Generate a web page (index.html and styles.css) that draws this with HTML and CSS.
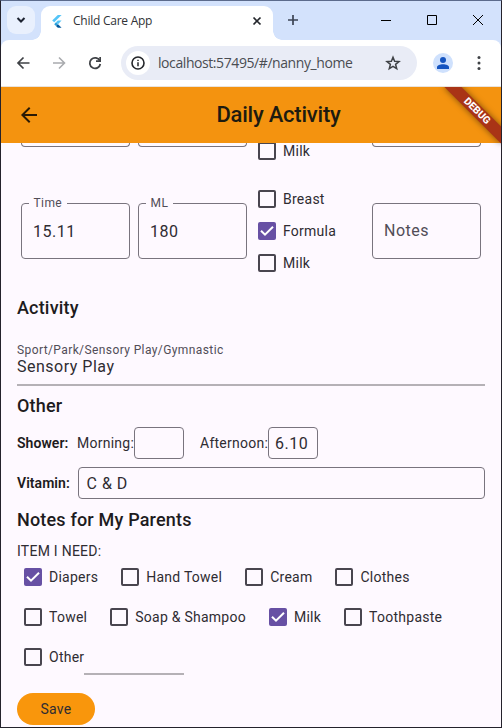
FILE: index.html
```html
<!DOCTYPE html>
<html lang="en">
<head>
<meta charset="utf-8">
<title>Child Care App</title>
<link rel="stylesheet" href="styles.css">
</head>
<body>
<div class="window">
  <div class="tabstrip">
    <div class="tab-search"><svg width="10" height="8" viewBox="0 0 10 8"><path d="M1.5 2 5 5.5 8.500 2" fill="none" stroke="#1d2331" stroke-width="2"/></svg></div>
    <div class="tab">
      <svg class="favicon" width="10" height="13" viewBox="0 0 10 13"><path d="M5.800 0H9.600L2.200 7.300.2 5.500z" fill="#54c5f8"/><path d="M5.800 5.500H9.600L6 9.200 4 7.300z" fill="#54c5f8"/><path d="M4 7.300 6 9.200 4 11.100 2.200 9.200z" fill="#29a0dc"/><path d="M4 11.100 6 9.200 9.600 12.700H5.800z" fill="#01579b"/></svg>
      <span class="tab-title">Child Care App</span>
      <svg class="tab-close" width="10" height="10" viewBox="0 0 10 10"><path d="M1.500 1.500 8.500 8.500M8.500 1.500 1.500 8.500" stroke="#24272c" stroke-width="1.700"/></svg>
    </div>
    <svg class="new-tab" width="12" height="12" viewBox="0 0 12 12"><path d="M6 1V11M1 6H11" stroke="#3c4454" stroke-width="1.700"/></svg>
    <div class="controls">
      <svg width="10" height="10" viewBox="0 0 10 10"><path d="M0 5.500H10" stroke="#000"/></svg>
      <svg width="10" height="10" viewBox="0 0 10 10"><path d="M.5.5H9.500V9.500H.5z" fill="none" stroke="#000"/></svg>
      <svg width="10" height="10" viewBox="0 0 10 10"><path d="M0 0 10 10M10 0 0 10" stroke="#000"/></svg>
    </div>
  </div>
  <div class="toolbar">
    <svg width="24" height="24" viewBox="0 0 24 24" class="nav"><path d="M18.500 12H7.500M12.500 6.500 7 12 12.500 17.500" fill="none" stroke="#3f4246" stroke-width="1.700"/></svg>
    <svg width="24" height="24" viewBox="0 0 24 24" class="nav"><path d="M6 12H17M12 6.500 17.500 12 12 17.500" fill="none" stroke="#a9abae" stroke-width="1.600"/></svg>
    <svg width="24" height="24" viewBox="0 0 24 24" class="nav"><path d="M16.800 9.700A5.300 5.300 0 1 0 17.300 13" fill="none" stroke="#3f4246" stroke-width="1.800"/><path d="M18 6V11H13V9.300H16.300V6z" fill="#3f4246"/></svg>
    <div class="omnibox">
      <span class="site-info"><svg width="14" height="14" viewBox="0 0 14 14"><circle cx="7" cy="7" r="6" fill="none" stroke="#24262a" stroke-width="1.600"/><path d="M7 6.200V10.200M7 3.700V5.100" stroke="#24262a" stroke-width="1.500"/></svg></span>
      <span class="url">localhost:57495/#/nanny_home</span>
      <svg class="star" width="16" height="16" viewBox="0 0 16 16"><path d="M8 2.200 9.600 6.300 14 6.600 10.600 9.400 11.700 13.700 8 11.300 4.300 13.700 5.400 9.400 2 6.600 6.400 6.300z" fill="none" stroke="#3f4246" stroke-width="1.500"/></svg>
    </div>
    <div class="profile"><svg width="12" height="12" viewBox="0 0 12 12"><circle cx="6" cy="3" r="3" fill="#1554c0"/><path d="M0 12V10C0 8.300 3 7.200 6 7.200S12 8.300 12 10V12z" fill="#1554c0"/></svg></div>
    <svg class="menu" width="4" height="16" viewBox="0 0 4 16" fill="#3f4246"><circle cx="2" cy="2.500" r="1.500"/><circle cx="2" cy="8" r="1.500"/><circle cx="2" cy="13.500" r="1.500"/></svg>
  </div>

  <div class="app">
    <header class="appbar">
      <svg width="24" height="24" viewBox="0 0 24 24"><path d="M20 11H7.830l5.590-5.590L12 4l-8 8 8 8 1.410-1.410L7.830 13H20z" fill="#2a1a05"/></svg>
      <h1>Daily Activity</h1>
    </header>
    <main>
      <div class="feed first">
        <div class="field"></div>
        <div class="field"></div>
        <label class="check"><i class="box"></i>Milk</label>
        <div class="field"></div>
      </div>
      <div class="feed">
        <div class="field"><span class="float">Time</span>15.11</div>
        <div class="field"><span class="float">ML</span>180</div>
        <div class="options">
          <label class="check"><i class="box"></i>Breast</label>
          <label class="check"><i class="box on"><svg viewBox="0 0 18 18"><path d="M3 8.700 7 12.700 15 4.700"/></svg></i>Formula</label>
          <label class="check"><i class="box"></i>Milk</label>
        </div>
        <div class="field hint">Notes</div>
      </div>
      <h2 class="activity">Activity</h2>
      <div class="underlined">
        <span class="caption">Sport/Park/Sensory Play/Gymnastic</span>
        <span class="value">Sensory Play</span>
      </div>
      <h2 class="other">Other</h2>
      <div class="line shower">
        <b>Shower:</b><span class="morning">Morning:</span><span class="input"></span><span class="afternoon">Afternoon:</span><span class="input">6.10</span>
      </div>
      <div class="line vitamin"><b>Vitamin:</b><span class="input wide">C &amp; D</span></div>
      <h2 class="notes">Notes for My Parents</h2>
      <p>ITEM I NEED:</p>
      <div class="items">
        <div class="items-row">
          <label class="check"><i class="box on"><svg viewBox="0 0 18 18"><path d="M3 8.700 7 12.700 15 4.700"/></svg></i>Diapers</label>
          <label class="check"><i class="box"></i>Hand Towel</label>
          <label class="check"><i class="box"></i>Cream</label>
          <label class="check"><i class="box"></i>Clothes</label>
        </div>
        <div class="items-row">
          <label class="check"><i class="box"></i>Towel</label>
          <label class="check"><i class="box"></i>Soap &amp; Shampoo</label>
          <label class="check"><i class="box on"><svg viewBox="0 0 18 18"><path d="M3 8.700 7 12.700 15 4.700"/></svg></i>Milk</label>
          <label class="check"><i class="box"></i>Toothpaste</label>
        </div>
        <div class="items-row">
          <label class="check"><i class="box"></i>Other<span class="blank"></span></label>
        </div>
      </div>
      <div class="save">Save</div>
    </main>
    <div class="banner">DEBUG</div>
  </div>
</div>
</body>
</html>
```
FILE: styles.css
```css
* { box-sizing: border-box; }
body { margin: 0; font-family: Roboto, sans-serif; color: #2f2c32; }
svg { display: block; flex: none; }
.window {
  width: 502px; height: 728px; overflow: hidden;
  display: flex; flex-direction: column;
  border: 1px solid #24222c; border-top-color: #5c6b8c;
  background: #d3e2fc;
}

/* browser frame */
.tabstrip { height: 39px; flex: none; display: flex; padding: 5px 0 0 6px; }
.tab-search {
  width: 28px; height: 28px; border-radius: 9px; background: #e9f0fd;
  display: flex; align-items: center; justify-content: center;
}
.tab {
  position: relative; width: 232px; height: 34px; margin-left: 6px; padding: 0 11px;
  display: flex; align-items: center; background: #fff; border-radius: 9px 9px 0 0;
}
.tab::before, .tab::after { content: ""; position: absolute; bottom: 0; width: 9px; height: 9px; }
.tab::before { right: 100%; background: radial-gradient(circle at 0 0, transparent 8.500px, #fff 9px); }
.tab::after { left: 100%; background: radial-gradient(circle at 100% 0, transparent 8.500px, #fff 9px); }
.favicon, .tab-close { margin-bottom: 4px; }
.tab-title { margin: 0 0 5px 11px; font: 12px "Open Sans", sans-serif; color: #303236; letter-spacing: -0.25px; white-space: nowrap; }
.tab-close { margin-left: auto; }
.new-tab { margin: 8px 0 0 14px; }
.controls { display: flex; gap: 36px; margin: 9px 0 0 82px; }
.toolbar {
  height: 47px; flex: none; display: flex; align-items: center;
  background: #fff; border-radius: 8px 8px 0 0; padding: 0 20px 0 10px;
  border-bottom: 1px solid #e9e3dc;
}
.nav + .nav { margin-left: 12px; }
.omnibox {
  width: 296px; height: 34px; margin-left: 14px; padding: 0 16px 0 5px;
  display: flex; align-items: center; border-radius: 17px; background: #e9ecf6;
}
.site-info { width: 24px; height: 24px; border-radius: 50%; background: #fff; display: flex; align-items: center; justify-content: center; }
.url { margin: 0 0 1px 8px; font: 14px "Open Sans", sans-serif; color: #4a4d52; letter-spacing: -0.42px; white-space: nowrap; }
.star { margin-left: auto; }
.profile { width: 20px; height: 20px; margin-left: 16px; border-radius: 50%; background: #cfe1fd; display: flex; align-items: center; justify-content: center; }
.menu { margin-left: auto; }

/* application */
.app { position: relative; flex: 1; overflow: hidden; display: flex; flex-direction: column; background: #fef9ff; }
.appbar { height: 56px; flex: none; display: flex; align-items: center; padding: 0 16px; background: #f4930f; }
.appbar h1 { flex: 1; margin: 0 0 0 31px; text-align: center; font-size: 22px; line-height: 28px; font-weight: 500; letter-spacing: -0.220px; color: #1d1b10; }
main { flex: 1; overflow: hidden; padding: 0 16px; font-size: 14px; letter-spacing: 0.25px; }
.feed { display: grid; grid-template-columns: repeat(4, 1fr); align-items: center; height: 96px; margin-bottom: 17px; }
.field {
  position: relative; height: 56px; margin: 0 4px; padding: 0 11px;
  display: flex; align-items: center; border: 1px solid #79747e; border-radius: 4px;
  font-size: 16px; letter-spacing: 0.5px;
}
.feed.first { height: 24px; margin-bottom: 16px; align-items: start; }
.feed.first .field { height: 4px; border-top: 0; border-radius: 0 0 4px 4px; }
.feed.first .check { margin-top: -8px; }
.field.hint { color: #514d57; padding-bottom: 2px; }
.float {
  position: absolute; top: -8px; left: 7px; padding: 0 5px 0 4.500px; background: #fef9ff;
  font-size: 12px; line-height: 14px; letter-spacing: 0.400px; color: #514d57;
}
.check { height: 32px; display: flex; align-items: center; white-space: nowrap; }
.box { flex: none; width: 18px; height: 18px; margin: 7px; border: 2px solid #49454f; border-radius: 2px; }
.box.on { border: 0; background: #6750a4; }
.box path { fill: none; stroke: #fff; stroke-width: 2; }
h2 { margin: 0; font-size: 18px; line-height: 24px; font-weight: 500; letter-spacing: 0.180px; color: #1d1b20; }
.underlined { height: 46px; margin-top: 20px; display: flex; flex-direction: column; border-bottom: 2px solid #b5b1b6; }
.caption { padding-top: 1px; font-size: 12px; line-height: 19px; letter-spacing: 0.400px; color: #514d57; }
.value { font-size: 16px; line-height: 13px; letter-spacing: 0.5px; }
.other { margin-top: 8px; }
.line { display: flex; align-items: center; height: 32px; margin-top: 9px; }
.line b { font-weight: 600; letter-spacing: 0.05px; color: #1d1b20; }
.shower b { width: 60px; }
.morning { width: 57px; }
.afternoon { width: 68px; margin-left: 16px; }
.input { width: 50px; height: 32px; display: flex; align-items: center; padding: 0 6px; border: 1px solid #79747e; border-radius: 4px; font-size: 16px; letter-spacing: 0.5px; }
.vitamin { margin-top: 8px; }
.vitamin b { width: 61px; }
.input.wide { flex: 1; padding: 0 7.500px; }
.notes { margin-top: 9px; }
p { margin: 10px 0 0; line-height: 19px; letter-spacing: 0.25px; }
.items { display: grid; gap: 8px; }
.items-row { display: flex; gap: 16px; }
.blank { width: 100px; height: 34px; margin-bottom: -2px; border-bottom: 2px solid #b5b1b6; }
.save { width: 78px; height: 32px; margin-top: 20px; border-radius: 16px; background: #f9960c; display: flex; align-items: center; justify-content: center; }
.banner {
  position: absolute; left: 100%; top: 0; width: 80px; height: 12px;
  transform-origin: 0 0; transform: rotate(45deg) translate(-40px, 28px);
  background: #a93416;
  box-shadow: 0 0 6px rgba(0, 0, 0, .5);
  color: #fff; font-size: 10.200px; line-height: 12px; font-weight: 800; text-align: center;
}
```
